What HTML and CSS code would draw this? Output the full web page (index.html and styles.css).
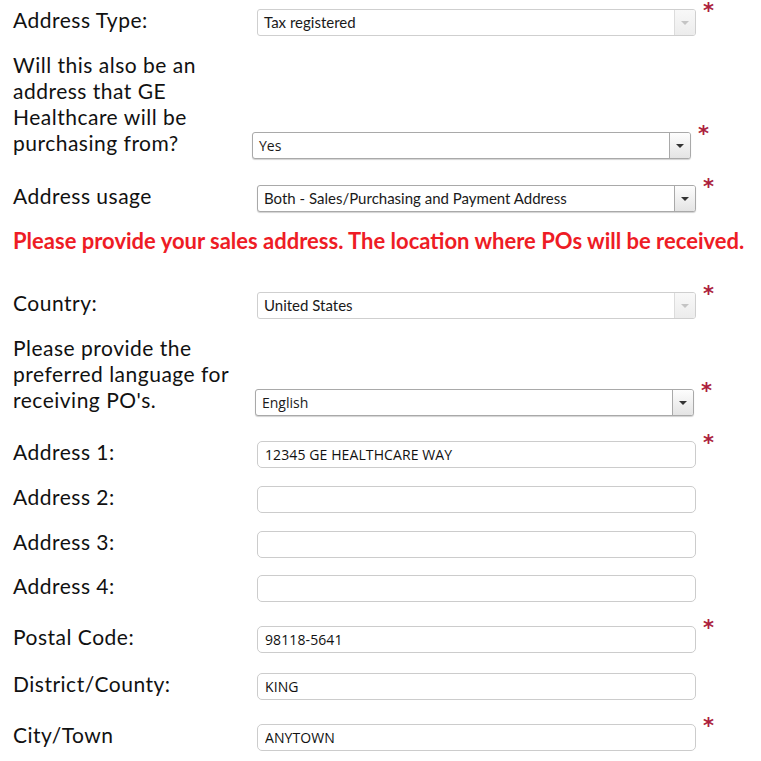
FILE: index.html
```html
<!DOCTYPE html>
<html lang="en">
<head>
<meta charset="utf-8">
<title>Address</title>
<link rel="stylesheet" href="styles.css">
</head>
<body>
<div class="form">
  <div class="row r1">
    <div class="label">Address Type:</div>
    <div class="field">
      <div class="select disabled"><span class="val">Tax registered</span><span class="btn"><i class="tri"></i></span></div>
      <span class="req">*</span>
    </div>
  </div>

  <div class="row multi r2">
    <div class="label">Will this also be an address that GE Healthcare will be purchasing from?</div>
    <div class="field shift-yes">
      <div class="select"><span class="val seg">Yes</span><span class="btn"><i class="tri"></i></span></div>
      <span class="req">*</span>
    </div>
  </div>

  <div class="row r3">
    <div class="label">Address usage</div>
    <div class="field">
      <div class="select"><span class="val">Both - Sales/Purchasing and Payment Address</span><span class="btn"><i class="tri"></i></span></div>
      <span class="req">*</span>
    </div>
  </div>

  <p class="note">Please provide your sales address. The location where POs will be received.</p>

  <div class="row r4">
    <div class="label">Country:</div>
    <div class="field">
      <div class="select disabled"><span class="val">United States</span><span class="btn"><i class="tri"></i></span></div>
      <span class="req">*</span>
    </div>
  </div>

  <div class="row multi r5">
    <div class="label">Please provide the preferred language for receiving PO's.</div>
    <div class="field shift-lang">
      <div class="select"><span class="val seg">English</span><span class="btn"><i class="tri"></i></span></div>
      <span class="req">*</span>
    </div>
  </div>

  <div class="row r6">
    <div class="label">Address 1:</div>
    <div class="field"><input class="text" type="text" value="12345 GE HEALTHCARE WAY"><span class="req">*</span></div>
  </div>
  <div class="row r7">
    <div class="label">Address 2:</div>
    <div class="field"><input class="text" type="text" value=""></div>
  </div>
  <div class="row r8">
    <div class="label">Address 3:</div>
    <div class="field"><input class="text" type="text" value=""></div>
  </div>
  <div class="row r9">
    <div class="label">Address 4:</div>
    <div class="field"><input class="text" type="text" value=""></div>
  </div>
  <div class="row r10">
    <div class="label">Postal Code:</div>
    <div class="field"><input class="text" type="text" value="98118-5641"><span class="req">*</span></div>
  </div>
  <div class="row r11">
    <div class="label">District/County:</div>
    <div class="field"><input class="text" type="text" value="KING"></div>
  </div>
  <div class="row r12">
    <div class="label">City/Town</div>
    <div class="field"><input class="text" type="text" value="ANYTOWN"><span class="req">*</span></div>
  </div>
</div>
</body>
</html>
```

FILE: styles.css
```css
* { box-sizing: border-box; }
html, body { margin: 0; padding: 0; background: #fff; }
body {
  font-family: Lato, "Liberation Sans", sans-serif;
  color: #111;
}
.form {
  padding-left: 13px;
  width: 761px;
}
.row {
  display: flex;
  align-items: flex-start;
}
.label {
  width: 244px;
  flex: none;
  font-size: 21px;
  line-height: 26px;
  letter-spacing: 0.5px;
  padding-right: 8px;
}
.field {
  display: flex;
  align-items: flex-start;
  margin-top: 2px;
}
.row.multi { align-items: flex-end; }
.row.multi .label { padding-bottom: 3px; }
.row.multi .field { margin-top: 0; }
.shift-yes { margin-left: -5px; }
.shift-lang { margin-left: -2px; }

.r1 { margin-top: 7px; }
.r2 { margin-top: 16px; }
.r3 { margin-top: 24px; }
.r4 { margin-top: 36px; }
.r5 { margin-top: 16px; }
.r6 { margin-top: 23px; }
.r7 { margin-top: 16px; }
.r8 { margin-top: 16px; }
.r9 { margin-top: 15px; }
.r10 { margin-top: 22px; }
.r11 { margin-top: 18px; }
.r12 { margin-top: 22px; }

.note {
  margin: 16px 0 0;
  font-size: 22px;
  line-height: 26px;
  font-weight: 700;
  color: #ee1c25;
  letter-spacing: 0;
  white-space: nowrap;
}

.select {
  width: 439px;
  height: 27px;
  display: flex;
  border: 1px solid #a9a9a9;
  border-radius: 3px;
  background: #fff;
  box-shadow: 0 1px 1px rgba(0,0,0,0.18);
  overflow: hidden;
}
.select .val {
  flex: 1;
  font-size: 15px;
  line-height: 25px;
  padding-left: 6px;
  color: #1a1a1a;
  white-space: nowrap;
}
.select .val.seg {
  font-family: "Open Sans", "Noto Sans", sans-serif;
  font-size: 14px;
}
.select .btn {
  width: 21px;
  flex: none;
  border-left: 1px solid #a9a9a9;
  background: linear-gradient(#fdfdfd, #e4e4e4);
  display: flex;
  align-items: center;
  justify-content: center;
}
.tri {
  display: block;
  width: 0;
  height: 0;
  border-left: 4px solid transparent;
  border-right: 4px solid transparent;
  border-top: 4px solid #333;
  margin-top: 1px;
}
.select.disabled {
  border-color: #cfcfcf;
  box-shadow: none;
}
.select.disabled .btn {
  border-left-color: #dcdcdc;
  background: linear-gradient(#f8f8f8, #ececec);
}
.select.disabled .tri { border-top-color: #c4c4c4; }

.text {
  width: 439px;
  height: 27px;
  border: 1px solid #cccccc;
  border-radius: 5px;
  padding: 0 0 0 7px;
  margin: 0;
  font-family: "Open Sans", "Noto Sans", sans-serif;
  font-size: 14px;
  letter-spacing: 0.1px;
  color: #111;
  background: #fff;
  outline: none;
}

.req {
  margin-left: 7px;
  margin-top: -8px;
  font-family: "DejaVu Sans", sans-serif;
  font-weight: 700;
  font-size: 21px;
  line-height: 20px;
  color: #ad1f3f;
}
```
